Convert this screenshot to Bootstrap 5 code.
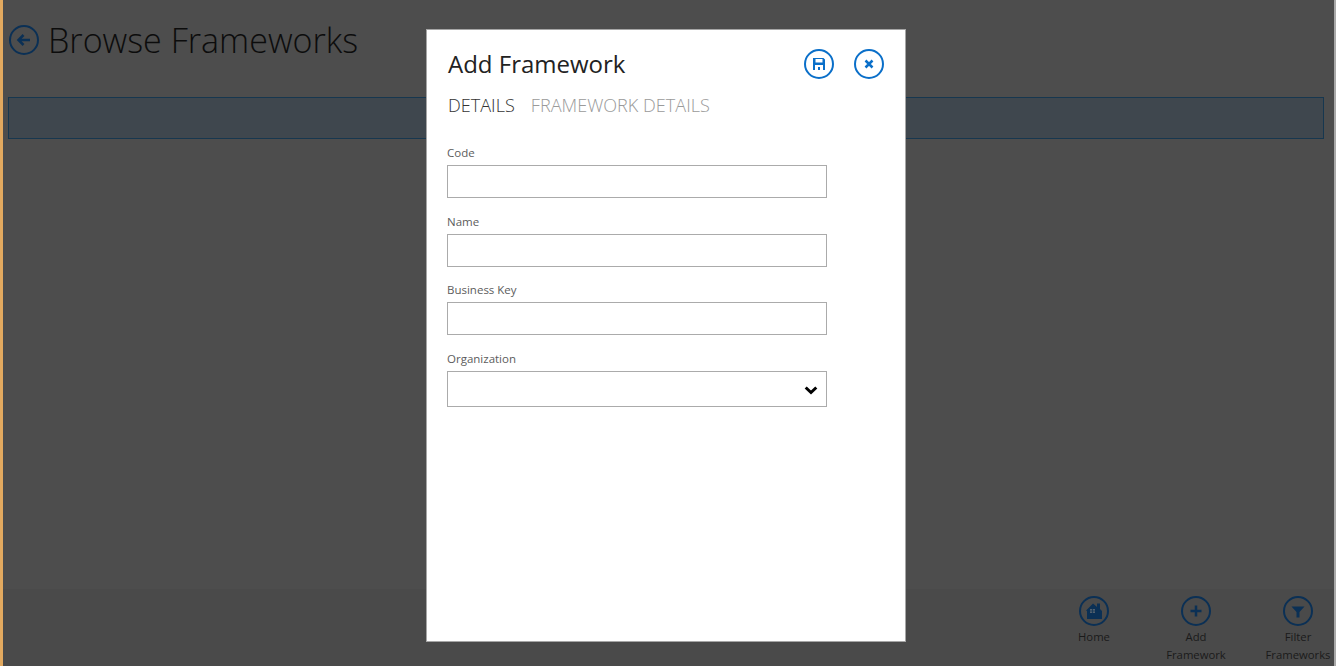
<!DOCTYPE html>
<html lang="en">

<head>
    <meta charset="UTF-8">
    <meta name="viewport" content="width=device-width, initial-scale=1.0">
    <title>Browse Frameworks</title>
    <link href="https://cdn.jsdelivr.net/npm/bootstrap@5.3.0/dist/css/bootstrap.min.css" rel="stylesheet">
    <style>
        html, body {
            height: 100%;
            overflow: hidden;
        }

        body {
            font-family: "Open Sans", "Noto Sans", sans-serif;
            background: #4d4d4d;
        }

        .app-shell {
            height: 666px;
            background: #4d4d4d;
            border-left: 3px solid #e2a95f;
            border-right: 2px solid #a9a9a9;
            position: relative;
            overflow: hidden;
        }

        .page-head {
            height: 97px;
            padding: 24px 0 0 5px;
            gap: 8px;
        }

        .page-title {
            font-size: 34.1px;
            font-weight: 300;
            line-height: 32px;
            color: #0c0c0c;
            margin: 0;
        }

        .grid-strip {
            height: 42px;
            margin: 0 10px 0 5px;
            background: #3f474e;
            border: 1px solid #17374f;
        }

        .app-bar {
            height: 77px;
            background: #4a4a4a;
            margin-right: -15px;
        }

        .bar-btn {
            width: 102px;
            padding-top: 6px;
            font-size: 11.3px;
            line-height: 18px;
            color: #1a1a1a;
            text-align: center;
        }

        .bar-btn svg {
            display: block;
            margin: 0 auto 1px;
        }

        .dialog-box {
            position: absolute;
            left: 423px;
            top: 29px;
            width: 480px;
            height: 613px;
            background: #fff;
            border: 1px solid #a6a6a6;
            padding: 0 20px;
        }

        .dialog-head {
            height: 63px;
            padding-top: 4px;
        }

        .dialog-title {
            font-size: 24px;
            font-weight: 400;
            line-height: 30px;
            color: #222;
            margin: 0 0 0 1px;
        }

        .round-btn {
            padding: 0;
            border: 0;
            background: none;
            line-height: 0;
        }

        .round-gap {
            gap: 18px;
            margin-top: 1px;
        }

        .tab-row {
            gap: 16px;
            height: 36px;
            padding-left: 1px;
        }

        .tab-row .nav-link {
            padding: 0;
            font-size: 18.1px;
            font-weight: 300;
            line-height: 24px;
            color: #9a9a9a;
        }

        .tab-row .nav-link.active {
            color: #333;
        }

        .field-list {
            width: 380px;
            padding-top: 16px;
        }

        .field-item {
            height: 68.67px;
        }

        .field-item .form-label {
            font-size: 11.5px;
            line-height: 16px;
            color: #5c5c5c;
            margin: 0 0 4px;
            display: block;
        }

        .field-item .form-control {
            height: 33px;
            border: 1px solid #ababab;
            border-radius: 0;
            padding: 0 8px;
        }

        .field-item .form-select {
            height: 36px;
            border: 1px solid #ababab;
            border-radius: 0;
            background-image: url("data:image/svg+xml,%3Csvg xmlns='http://www.w3.org/2000/svg' viewBox='0 0 14 10'%3E%3Cpath d='M1.7 1.5 7 6.5l5.3-5' fill='none' stroke='%23000' stroke-width='3'/%3E%3C/svg%3E");
            background-size: 14px 10px;
            background-position: right 8px top 14px;
        }
    </style>
</head>

<body>
    <div class="app-shell d-flex flex-column">
        <header class="page-head d-flex align-items-start">
            <svg width="32" height="32" viewBox="0 0 32 32" class="flex-shrink-0">
                <circle cx="16" cy="16" r="14" fill="none" stroke="#0b3055" stroke-width="2" />
                <path d="M22 16H11M15.500 11 10.500 16l5 5" fill="none" stroke="#0b3055" stroke-width="2.500" />
            </svg>
            <h1 class="page-title">Browse Frameworks</h1>
        </header>
        <div class="grid-strip"></div>
        <div class="flex-grow-1"></div>
        <footer class="app-bar d-flex justify-content-end">
            <div class="bar-btn">
                <svg width="32" height="32" viewBox="0 0 32 32">
                    <circle cx="16" cy="16" r="14" fill="none" stroke="#0b3055" stroke-width="2" />
                    <path d="M8 15.500 15 8.500l4 3.500V8.500h3V14l2 2v8H9v-8z" fill="#0b3055" />
                    <path d="M12 14h5v4h-5z" fill="#52606e" />
                    <path d="M12 16h5M14.500 14v4" stroke="#0b3055" stroke-width=".7" />
                </svg>
                Home
            </div>
            <div class="bar-btn">
                <svg width="32" height="32" viewBox="0 0 32 32">
                    <circle cx="16" cy="16" r="14" fill="none" stroke="#0b3055" stroke-width="2" />
                    <path d="M16 10.500v11M10.500 16h11" fill="none" stroke="#0b3055" stroke-width="2.500" />
                </svg>
                Add<br>Framework
            </div>
            <div class="bar-btn">
                <svg width="32" height="32" viewBox="0 0 32 32">
                    <circle cx="16" cy="16" r="14" fill="none" stroke="#0b3055" stroke-width="2" />
                    <path d="M9.500 11.500h13L17.500 17v5.500h-3V17z" fill="#0b3055" />
                </svg>
                Filter<br>Frameworks
            </div>
        </footer>

        <div class="dialog-box" role="dialog">
            <div class="dialog-head d-flex align-items-center justify-content-between">
                <h2 class="dialog-title">Add Framework</h2>
                <div class="d-flex round-gap">
                    <button class="round-btn" type="button" aria-label="Save">
                        <svg width="32" height="32" viewBox="0 0 32 32" class="d-block">
                            <circle cx="16" cy="16" r="14" fill="none" stroke="#0a6fc9" stroke-width="2" />
                            <path fill-rule="evenodd" d="M10 10h10.500l1.500 1.500V22H10zM12.500 11v3.500h7V11zM12 17v5h8v-5zM15 19h2v3h-2z" fill="#0a6fc9" />
                        </svg>
                    </button>
                    <button class="round-btn" type="button" aria-label="Close">
                        <svg width="32" height="32" viewBox="0 0 32 32" class="d-block">
                            <circle cx="16" cy="16" r="14" fill="none" stroke="#0a6fc9" stroke-width="2" />
                            <path d="M12.500 12.500l7 7M19.500 12.500l-7 7" fill="none" stroke="#0a6fc9" stroke-width="2.500" />
                        </svg>
                    </button>
                </div>
            </div>
            <ul class="nav tab-row">
                <li class="nav-item"><a class="nav-link active" href="#">DETAILS</a></li>
                <li class="nav-item"><a class="nav-link" href="#">FRAMEWORK DETAILS</a></li>
            </ul>
            <form class="field-list">
                <div class="field-item">
                    <label class="form-label" for="code">Code</label>
                    <input class="form-control" id="code" type="text">
                </div>
                <div class="field-item">
                    <label class="form-label" for="name">Name</label>
                    <input class="form-control" id="name" type="text">
                </div>
                <div class="field-item">
                    <label class="form-label" for="business-key">Business Key</label>
                    <input class="form-control" id="business-key" type="text">
                </div>
                <div class="field-item">
                    <label class="form-label" for="organization">Organization</label>
                    <select class="form-select" id="organization"></select>
                </div>
            </form>
        </div>
    </div>

    <script src="https://cdn.jsdelivr.net/npm/bootstrap@5.3.0/dist/js/bootstrap.bundle.min.js"></script>
</body>

</html>
